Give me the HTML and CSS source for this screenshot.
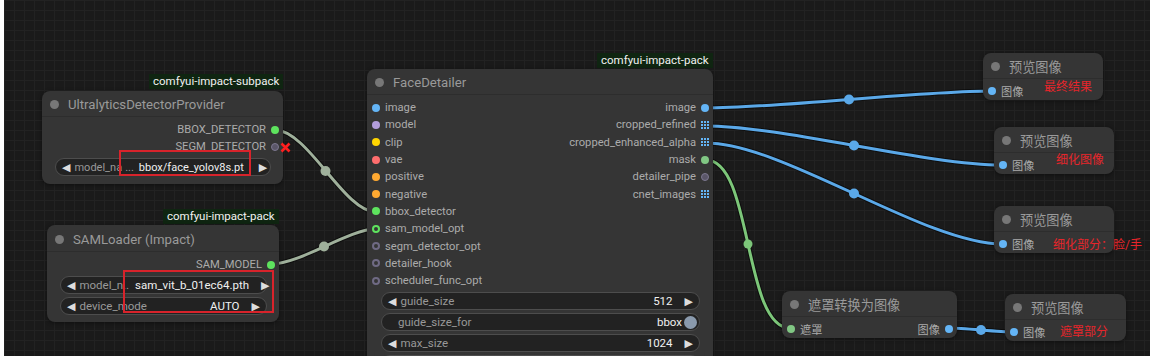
FILE: index.html
```html
<!DOCTYPE html>
<html lang="zh">
<head>
    <meta charset="UTF-8">
    <title>ComfyUI - FaceDetailer</title>
    <link rel="stylesheet" href="styles.css">
</head>
<body>
<div class="canvas">
    <div class="world">
        <svg class="links" width="1158" height="356" viewBox="0 0 1158 356">
            <g fill="none" stroke-linecap="round">
                <path class="link-shadow" d="M706 108 C778 108 920 91 992 91"/>
                <path class="link-shadow" d="M706 126 C781 126 927 165 1002 165"/>
                <path class="link-shadow" d="M706 143 C783 143 925 244 1002 244"/>
                <path class="link-shadow" d="M706 160 C753 160 743 328 790 328"/>
                <path class="link-shadow" d="M949 328 C965 328 997 332 1013 332"/>
                <path class="link-shadow" d="M275 130 C308 130 344 212 376 212"/>
                <path class="link-shadow" d="M272 264 C300 264 349 229 376 229"/>

                <path class="link blue" d="M706 108 C778 108 920 91 992 91"/>
                <path class="link blue" d="M706 126 C781 126 927 165 1002 165"/>
                <path class="link blue" d="M706 143 C783 143 925 244 1002 244"/>
                <path class="link green" d="M706 160 C753 160 743 328 790 328"/>
                <path class="link blue" d="M949 328 C965 328 997 332 1013 332"/>
                <path class="link grey" d="M275 130 C308 130 344 212 376 212"/>
                <path class="link grey" d="M272 264 C300 264 349 229 376 229"/>
            </g>
            <circle class="mid blue" cx="849" cy="99.5" r="5"/>
            <circle class="mid blue" cx="854" cy="145.5" r="5"/>
            <circle class="mid blue" cx="854" cy="193.5" r="5"/>
            <circle class="mid green" cx="748" cy="244" r="4.5"/>
            <circle class="mid blue" cx="981" cy="330" r="5"/>
            <circle class="mid grey" cx="325.5" cy="171" r="5"/>
            <circle class="mid grey" cx="324" cy="246.5" r="5"/>
        </svg>

        <div class="badge b-subpack">comfyui-impact-subpack</div>
        <div class="badge b-sam">comfyui-impact-pack</div>
        <div class="badge b-face">comfyui-impact-pack</div>

        <!-- UltralyticsDetectorProvider -->
        <div class="node n-ultra">
            <div class="node-title"><span class="title-dot"></span>UltralyticsDetectorProvider</div>
            <div class="node-body">
                <div class="row"><span></span><span class="slot out">BBOX_DETECTOR<i class="dot c-bright"></i></span></div>
                <div class="row"><span></span><span class="slot out">SEGM_DETECTOR<i class="dot c-pipe"></i></span></div>
                <div class="widget">
                    <span class="arrow">&#9664;</span>
                    <span class="w-label">model_na</span>
                    <span class="w-dots">...</span>
                    <span class="w-value">bbox/face_yolov8s.pt</span>
                    <span class="arrow right">&#9654;</span>
                </div>
            </div>
        </div>
        <svg class="bad-link" width="11" height="11" viewBox="0 0 11 11">
            <path d="M1.5 1.5 L9.5 9.5 M9.5 1.5 L1.5 9.5"/>
        </svg>

        <!-- SAMLoader -->
        <div class="node n-sam">
            <div class="node-title"><span class="title-dot"></span>SAMLoader (Impact)</div>
            <div class="node-body">
                <div class="row"><span></span><span class="slot out">SAM_MODEL<i class="dot c-bright"></i></span></div>
                <div class="widget">
                    <span class="arrow">&#9664;</span>
                    <span class="w-label">model_n..</span>
                    <span class="w-value">sam_vit_b_01ec64.pth</span>
                    <span class="arrow right">&#9654;</span>
                </div>
                <div class="widget">
                    <span class="arrow">&#9664;</span>
                    <span class="w-label">device_mode</span>
                    <span class="w-value">AUTO</span>
                    <span class="arrow right">&#9654;</span>
                </div>
            </div>
        </div>

        <div class="mark m-ultra"></div>
        <div class="mark m-sam"></div>

        <!-- FaceDetailer -->
        <div class="node n-face">
            <div class="node-title"><span class="title-dot"></span>FaceDetailer</div>
            <div class="node-body">
                <div class="row"><span class="slot in"><i class="dot c-image"></i>image</span><span class="slot out">image<i class="dot c-image"></i></span></div>
                <div class="row"><span class="slot in"><i class="dot c-model"></i>model</span><span class="slot out">cropped_refined<i class="list"></i></span></div>
                <div class="row"><span class="slot in"><i class="dot c-clip"></i>clip</span><span class="slot out">cropped_enhanced_alpha<i class="list"></i></span></div>
                <div class="row"><span class="slot in"><i class="dot c-vae"></i>vae</span><span class="slot out">mask<i class="dot c-mask"></i></span></div>
                <div class="row"><span class="slot in"><i class="dot c-cond"></i>positive</span><span class="slot out">detailer_pipe<i class="dot c-pipe"></i></span></div>
                <div class="row"><span class="slot in"><i class="dot c-cond"></i>negative</span><span class="slot out">cnet_images<i class="list"></i></span></div>
                <div class="row"><span class="slot in"><i class="dot c-bright"></i>bbox_detector</span></div>
                <div class="row"><span class="slot in"><i class="dot ring c-ring-green"></i>sam_model_opt</span></div>
                <div class="row"><span class="slot in"><i class="dot ring"></i>segm_detector_opt</span></div>
                <div class="row"><span class="slot in"><i class="dot ring"></i>detailer_hook</span></div>
                <div class="row"><span class="slot in"><i class="dot ring"></i>scheduler_func_opt</span></div>
                <div class="widget">
                    <span class="arrow">&#9664;</span>
                    <span class="w-label">guide_size</span>
                    <span class="w-value">512</span>
                    <span class="arrow right">&#9654;</span>
                </div>
                <div class="widget toggle">
                    <span class="w-label">guide_size_for</span>
                    <span class="w-value">bbox</span>
                    <span class="knob"></span>
                </div>
                <div class="widget">
                    <span class="arrow">&#9664;</span>
                    <span class="w-label">max_size</span>
                    <span class="w-value">1024</span>
                    <span class="arrow right">&#9654;</span>
                </div>
                <div class="widget"></div>
            </div>
        </div>

        <!-- preview nodes -->
        <div class="node small n-prev1">
            <div class="node-title"><span class="title-dot"></span>预览图像</div>
            <div class="node-body">
                <div class="row"><span class="slot in"><i class="dot c-image"></i>图像</span></div>
            </div>
        </div>
        <div class="node small n-prev2">
            <div class="node-title"><span class="title-dot"></span>预览图像</div>
            <div class="node-body">
                <div class="row"><span class="slot in"><i class="dot c-image"></i>图像</span></div>
            </div>
        </div>
        <div class="node small n-prev3">
            <div class="node-title"><span class="title-dot"></span>预览图像</div>
            <div class="node-body">
                <div class="row"><span class="slot in"><i class="dot c-image"></i>图像</span></div>
            </div>
        </div>
        <div class="node small n-mask">
            <div class="node-title"><span class="title-dot"></span>遮罩转换为图像</div>
            <div class="node-body">
                <div class="row"><span class="slot in"><i class="dot c-mask"></i>遮罩</span><span class="slot out">图像<i class="dot c-image"></i></span></div>
            </div>
        </div>
        <div class="node small n-prev4">
            <div class="node-title"><span class="title-dot"></span>预览图像</div>
            <div class="node-body">
                <div class="row"><span class="slot in"><i class="dot c-image"></i>图像</span></div>
            </div>
        </div>

        <div class="note note1">最终结果</div>
        <div class="note note2">细化图像</div>
        <div class="note note3">细化部分：脸/手</div>
        <div class="note note4">遮罩部分</div>
    </div>
</div>
</body>
</html>
```

FILE: styles.css
```css
body {
    margin: 0;
    background-color: #fff;
    font-family: Roboto, "Noto Sans CJK SC", sans-serif;
}

.canvas {
    position: relative;
    margin-left: 4px;
    width: 1146px;
    height: 356px;
    overflow: hidden;
    background-color: #1a1a1a;
    background-image:
        linear-gradient(#222 1px, transparent 1px),
        linear-gradient(90deg, #222 1px, transparent 1px);
    background-size: 10px 10px;
}

.world {
    position: absolute;
    left: -4px;
    top: 0;
    width: 1158px;
    height: 356px;
}

/* links */
.links {
    position: absolute;
    left: 0;
    top: 0;
}

.link-shadow {
    stroke: rgba(0, 0, 0, 0.5);
    stroke-width: 5;
}

.link {
    stroke-width: 3;
}

.link.blue { stroke: #5aa8e8; }
.link.green { stroke: #7cc679; }
.link.grey { stroke: #9fb09b; }

.mid.blue { fill: #5aa8e8; }
.mid.green { fill: #7cc679; }
.mid.grey { fill: #9fb09b; }

/* source badges */
.badge {
    position: absolute;
    height: 15px;
    line-height: 15px;
    padding: 0 4px;
    background-color: #0f2511;
    color: #f2f2f2;
    font-size: 11.5px;
    white-space: nowrap;
}

.b-subpack { left: 149px; top: 74px; }
.b-sam { left: 163px; top: 209px; }
.b-face { left: 597px; top: 53px; }

/* nodes */
.node {
    position: absolute;
    background-color: #353535;
    border-radius: 8px;
    box-shadow: 0 1px 4px rgba(0, 0, 0, 0.45);
    color: #ababab;
    font-size: 11.2px;
}

.node-title {
    display: flex;
    align-items: center;
    height: 26px;
    padding-left: 8px;
    padding-top: 2px;
    border-bottom: 1px solid #2d2d2d;
    box-sizing: border-box;
    color: #9a9a9a;
    font-size: 13.2px;
    white-space: nowrap;
}

.title-dot {
    width: 9px;
    height: 9px;
    margin-right: 9px;
    border-radius: 50%;
    background-color: #777;
}

.node-body {
    padding: 4px 0 9px;
}

.row {
    display: flex;
    justify-content: space-between;
    align-items: center;
    height: 17px;
}

.slot {
    display: flex;
    align-items: center;
    white-space: nowrap;
}

.slot.in {
    padding-left: 5px;
}

.slot.in .dot {
    margin-right: 5px;
}

.slot.out {
    padding-right: 4px;
}

.slot.out .dot,
.slot.out .list {
    margin-left: 5px;
}

.dot {
    display: inline-block;
    width: 8px;
    height: 8px;
    border-radius: 50%;
    box-sizing: border-box;
}

.dot.ring {
    border: 2px solid #6f6a84;
    background-color: transparent;
}

.dot.ring.c-ring-green {
    border-color: #5ee35e;
}

.c-image { background-color: #64b5f6; }
.c-model { background-color: #b39ddb; }
.c-clip { background-color: #ffd500; }
.c-vae { background-color: #ff6e6e; }
.c-cond { background-color: #ffa931; }
.c-bright { background-color: #5ee35e; }
.c-mask { background-color: #81c784; }
.c-pipe { background-color: #5a5668; border: 1px solid #7d7890; }

.list {
    display: inline-block;
    width: 8px;
    height: 8px;
    background-image:
        linear-gradient(90deg, #64b5f6 2px, transparent 2px),
        linear-gradient(#64b5f6 2px, transparent 2px);
    background-size: 3px 3px;
    -webkit-mask: linear-gradient(90deg, #000 2px, transparent 2px) 0 0 / 3px 3px,
        linear-gradient(#000 2px, transparent 2px) 0 0 / 3px 3px;
    -webkit-mask-composite: source-in;
}

/* widgets */
.widget {
    display: flex;
    align-items: center;
    height: 18px;
    margin: 3px 12px 0 13px;
    padding: 0 6px;
    border: 1px solid #4d4d4d;
    border-radius: 10px;
    background-color: #222;
    box-sizing: border-box;
    font-size: 11.5px;
    white-space: nowrap;
}

.arrow {
    color: #ddd;
    font-family: "DejaVu Sans", sans-serif;
    font-size: 11px;
    flex: none;
}

.w-label {
    flex: 1 0 auto;
    margin-left: 4px;
    margin-right: 6px;
    color: #999;
}

.w-dots {
    margin-right: 5px;
    color: #999;
}

.w-value {
    margin-right: 12px;
    color: #f0f0f0;
}

.widget.toggle {
    padding-left: 12px;
    padding-right: 2px;
}

.widget.toggle .w-value {
    margin-right: 2px;
}

.knob {
    width: 13px;
    height: 13px;
    border-radius: 50%;
    background-color: #8a9aad;
}

/* node positions */
.n-ultra { left: 42px; top: 91px; width: 241px; height: 93px; }
.n-ultra .widget { font-size: 11px; }
.n-ultra .w-label { margin-right: 3px; }
.n-ultra .w-value { margin-right: 15px; }
.n-sam { left: 47px; top: 225px; width: 232px; height: 97px; }
.n-sam .node-title { height: 27px; }
.n-face { left: 367px; top: 69px; width: 346px; height: 300px; }
.n-face .row { height: 17.3px; }
.n-face .widget { margin: 3px 13px 0 14px; }

.node.small .node-body { padding: 3px 0 1px; }
.n-prev1 { left: 983px; top: 53px; width: 120px; }
.n-prev2 { left: 994px; top: 127px; width: 120px; }
.n-prev3 { left: 994px; top: 206px; width: 120px; }
.n-mask { left: 782px; top: 291px; width: 175px; }
.n-prev4 { left: 1005px; top: 294px; width: 121px; }

/* annotations */
.mark {
    position: absolute;
    border: 2px solid #d8232b;
    box-sizing: border-box;
}

.m-ultra { left: 119px; top: 150px; width: 132px; height: 26px; }
.m-sam { left: 123px; top: 270px; width: 151px; height: 43px; }

.bad-link {
    position: absolute;
    left: 280px;
    top: 142px;
}

.bad-link path {
    stroke: #ff1f1f;
    stroke-width: 2.6;
    fill: none;
}

.note {
    position: absolute;
    color: #e5252b;
    font-size: 12px;
    white-space: nowrap;
    line-height: 16px;
}

.note1 { left: 1044px; top: 79px; }
.note2 { left: 1056px; top: 152px; }
.note3 { left: 1053px; top: 237px; }
.note4 { left: 1060px; top: 324px; }
```
